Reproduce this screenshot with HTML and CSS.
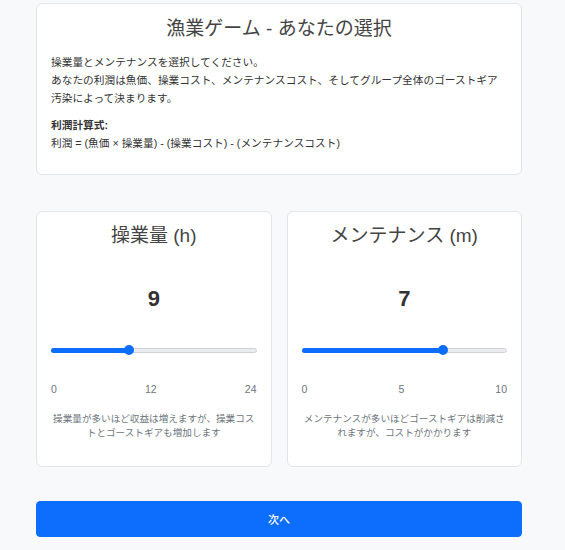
FILE: index.html
```html
<!DOCTYPE html>
<html lang="ja">
<head>
<meta charset="utf-8">
<title>漁業ゲーム - あなたの選択</title>
<link rel="stylesheet" href="styles.css">
</head>
<body>
<main class="page">
  <section class="card intro">
    <h1 class="intro-title">漁業ゲーム - あなたの選択</h1>
    <p class="intro-text">操業量とメンテナンスを選択してください。<br>あなたの利潤は魚価、操業コスト、メンテナンスコスト、そしてグループ全体のゴーストギア汚染によって決まります。</p>
    <p class="intro-formula"><strong>利潤計算式:</strong><br>利潤 = (魚価 × 操業量) - (操業コスト) - (メンテナンスコスト)</p>
  </section>

  <div class="controls">
    <section class="card control">
      <h2 class="control-title">操業量 (h)</h2>
      <div class="control-value">9</div>
      <div class="slider">
        <div class="slider-track"></div>
        <div class="slider-fill" style="width: calc(5px + (100% - 10px) * 0.375);"></div>
        <div class="slider-thumb" style="left: calc((100% - 10px) * 0.375);"></div>
      </div>
      <div class="scale"><span>0</span><span>12</span><span>24</span></div>
      <p class="hint">操業量が多いほど収益は増えますが、操業コストとゴーストギアも増加します</p>
    </section>

    <section class="card control">
      <h2 class="control-title">メンテナンス (m)</h2>
      <div class="control-value">7</div>
      <div class="slider">
        <div class="slider-track"></div>
        <div class="slider-fill" style="width: calc(5px + (100% - 10px) * 0.7);"></div>
        <div class="slider-thumb" style="left: calc((100% - 10px) * 0.7);"></div>
      </div>
      <div class="scale"><span>0</span><span>5</span><span>10</span></div>
      <p class="hint">メンテナンスが多いほどゴーストギアは削減されますが、コストがかかります</p>
    </section>
  </div>

  <button class="next-btn" type="button">次へ</button>
</main>
</body>
</html>
```

FILE: styles.css
```css
* { box-sizing: border-box; }

html, body {
  margin: 0;
  padding: 0;
  background: #f8f9fa;
}

body {
  font-family: "Liberation Sans", "Noto Sans CJK JP", sans-serif;
  color: #333;
}

.page {
  width: 486px;
  margin-left: 36px;
  padding-top: 3px;
}

.card {
  background: #fff;
  border: 1px solid #e2e5e9;
  border-radius: 6px;
}

.intro {
  padding: 12.5px 14px 22px;
}

.intro-title {
  margin: 0;
  font-size: 19px;
  line-height: 23px;
  font-weight: 400;
  color: #444;
  text-align: center;
}

.intro-text {
  margin: 13.2px 0 0;
  font-size: 10.7px;
  line-height: 18px;
}

.intro-formula {
  margin: 9.3px 0 0;
  font-size: 10.7px;
  line-height: 18px;
}

.intro-formula strong {
  font-weight: 700;
}

.controls {
  display: grid;
  grid-template-columns: 1fr 1fr;
  gap: 15px;
  margin-top: 35.7px;
}

.control {
  padding: 12px 14px 26px;
  text-align: center;
}

.control-title {
  margin: 0;
  font-size: 19px;
  line-height: 23px;
  font-weight: 400;
  color: #444;
}

.control-value {
  margin-top: 39.5px;
  font-size: 22px;
  line-height: 26px;
  font-weight: 700;
  color: #333;
}

.slider {
  position: relative;
  height: 10px;
  margin-top: 33px;
}

.slider-track {
  position: absolute;
  left: 0;
  right: 0;
  top: 2.5px;
  height: 5px;
  border-radius: 3px;
  background: #e9ecef;
  border: 1px solid #cfd2d6;
}

.slider-fill {
  position: absolute;
  left: 0;
  top: 2.5px;
  height: 5px;
  border-radius: 3px;
  background: #0d6efd;
}

.slider-thumb {
  position: absolute;
  top: 0;
  width: 10px;
  height: 10px;
  border-radius: 50%;
  background: #0d6efd;
}

.scale {
  display: flex;
  justify-content: space-between;
  margin-top: 26.7px;
  font-size: 10.5px;
  line-height: 14px;
  color: #6c757d;
}

.hint {
  margin: 15.7px 0 0;
  font-size: 9.6px;
  line-height: 14px;
  color: #6c757d;
}

.next-btn {
  display: block;
  width: 100%;
  height: 36px;
  margin-top: 34.3px;
  border: 1px solid #0d6efd;
  border-radius: 4px;
  background: #0d6efd;
  color: #fff;
  font-family: "Liberation Sans", "Noto Sans CJK JP", sans-serif;
  font-size: 11px;
  font-weight: 500;
}
```
